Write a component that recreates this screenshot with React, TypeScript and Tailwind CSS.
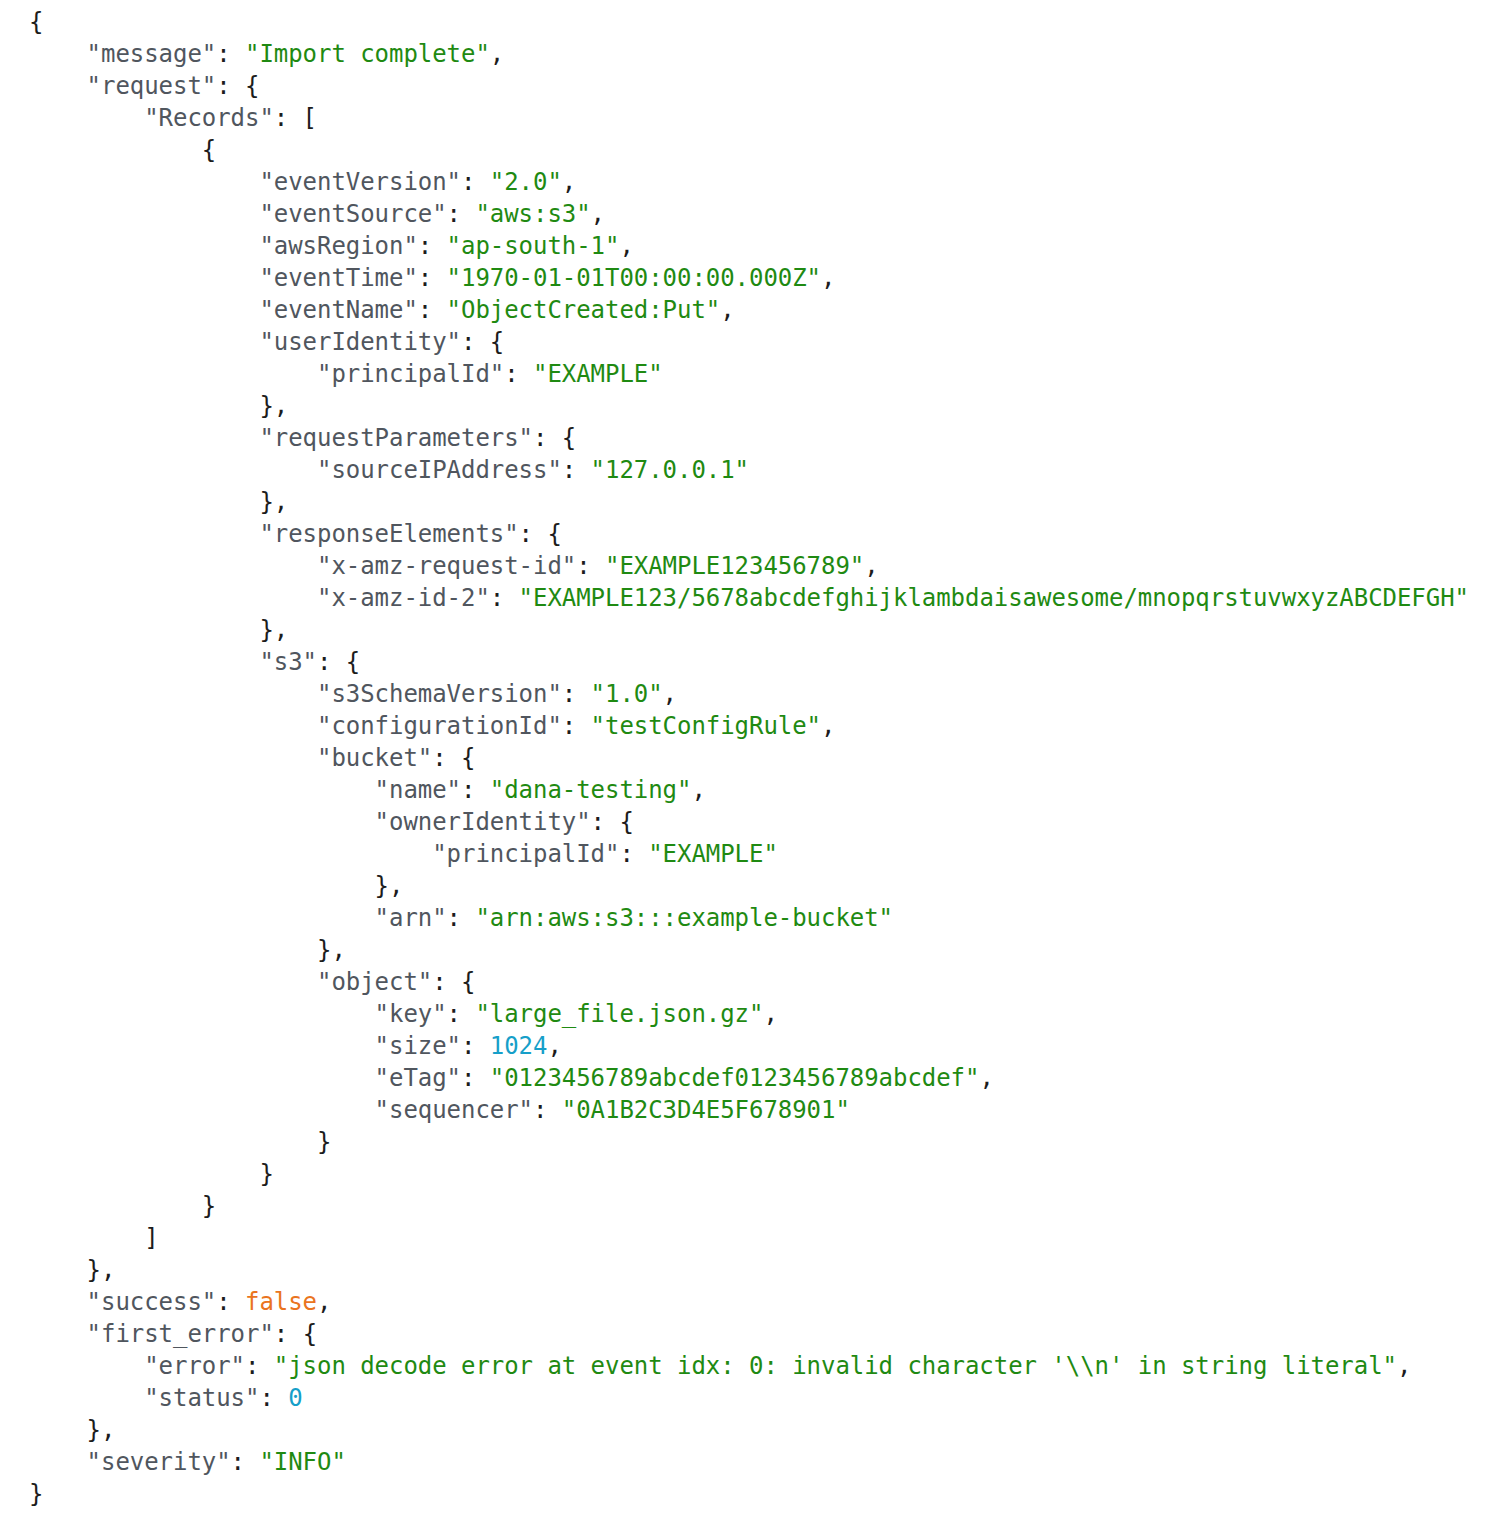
import React from "react";

type Json = string | number | boolean | null | Json[] | { [k: string]: Json };

const data: Json = {
  message: "Import complete",
  request: {
    Records: [
      {
        eventVersion: "2.0",
        eventSource: "aws:s3",
        awsRegion: "ap-south-1",
        eventTime: "1970-01-01T00:00:00.000Z",
        eventName: "ObjectCreated:Put",
        userIdentity: {
          principalId: "EXAMPLE",
        },
        requestParameters: {
          sourceIPAddress: "127.0.0.1",
        },
        responseElements: {
          "x-amz-request-id": "EXAMPLE123456789",
          "x-amz-id-2": "EXAMPLE123/5678abcdefghijklambdaisawesome/mnopqrstuvwxyzABCDEFGH",
        },
        s3: {
          s3SchemaVersion: "1.0",
          configurationId: "testConfigRule",
          bucket: {
            name: "dana-testing",
            ownerIdentity: {
              principalId: "EXAMPLE",
            },
            arn: "arn:aws:s3:::example-bucket",
          },
          object: {
            key: "large_file.json.gz",
            size: 1024,
            eTag: "0123456789abcdef0123456789abcdef",
            sequencer: "0A1B2C3D4E5F678901",
          },
        },
      },
    ],
  },
  success: false,
  first_error: {
    error: "json decode error at event idx: 0: invalid character '\\n' in string literal",
    status: 0,
  },
  severity: "INFO",
};

type Line = { depth: number; parts: React.ReactNode[] };

function Value({ v }: { v: Json }) {
  if (typeof v === "string") return <span className="text-[#1f8a12]">{JSON.stringify(v)}</span>;
  if (typeof v === "number") return <span className="text-[#169fc9]">{String(v)}</span>;
  if (typeof v === "boolean") return <span className="text-[#ea7420]">{String(v)}</span>;
  return <span className="text-[#8a8a8a]">null</span>;
}

// flatten the object into printable lines
function build(v: Json, depth: number, key: string | null, last: boolean, out: Line[]) {
  const keyPart = key !== null ? [<span key="k" className="text-[#50565e]">{JSON.stringify(key)}</span>, ": "] : [];
  const comma = last ? "" : ",";
  if (v !== null && typeof v === "object") {
    const isArr = Array.isArray(v);
    const entries: [string | null, Json][] = isArr
      ? (v as Json[]).map((x) => [null, x])
      : Object.entries(v as Record<string, Json>);
    out.push({ depth, parts: [...keyPart, isArr ? "[" : "{"] });
    entries.forEach(([k, x], i) => build(x, depth + 1, k, i === entries.length - 1, out));
    out.push({ depth, parts: [isArr ? "]" : "}", comma] });
  } else {
    out.push({ depth, parts: [...keyPart, <Value key="v" v={v} />, comma] });
  }
}

export default function App() {
  const lines: Line[] = [];
  build(data, 0, null, true, lines);

  return (
    <div className="min-h-screen bg-white">
      <pre
        className="pl-[29px] pt-[6px] text-[24px] leading-[32px] tracking-[-0.05px] text-[#1c1c1c]"
        style={{ fontFamily: 'Menlo, "DejaVu Sans Mono", monospace' }}
      >
        {lines.map((l, i) => (
          <div key={i} className="whitespace-pre">
            {"    ".repeat(l.depth)}
            {l.parts.map((p, j) => (
              <React.Fragment key={j}>{p}</React.Fragment>
            ))}
          </div>
        ))}
      </pre>
    </div>
  );
}
